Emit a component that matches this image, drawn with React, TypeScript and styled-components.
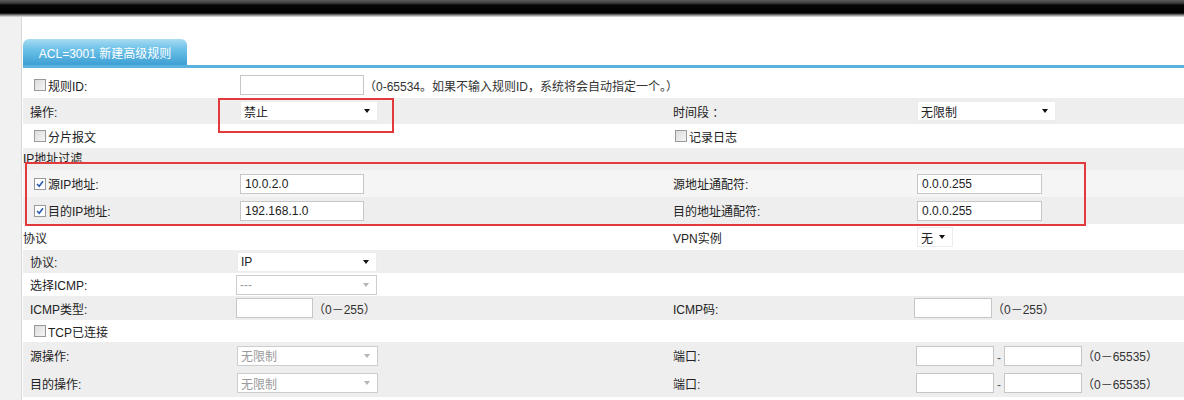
import React from "react";
import styled, { createGlobalStyle } from "styled-components";

const GlobalStyle = createGlobalStyle`
  html, body {
    margin: 0;
    padding: 0;
    background: #fff;
  }
  body {
    font-family: "Liberation Sans", "Noto Sans CJK SC", sans-serif;
    font-size: 12px;
    color: #222;
  }
`;

const Page = styled.div`
  position: relative;
  width: 1184px;
  height: 400px;
  overflow: hidden;
`;

const TopBar = styled.div`
  height: 17px;
  background: linear-gradient(
    to bottom,
    #5c5c5c 0px,
    #3c3c3c 3px,
    #060606 5px,
    #000 13px,
    #808080 15px,
    #e6e6e6 17px
  );
`;

const Shell = styled.div`
  display: flex;
  height: 383px;
`;

const SideStrip = styled.div`
  width: 21px;
  flex: none;
  background: #f1f1f1;
  border-right: 1px solid #d9d9d9;
`;

const Main = styled.div`
  flex: 1;
  padding: 22px 0 0 1px;
`;

const TabBar = styled.div`
  display: flex;
  border-bottom: 3px solid #5cb2de;
`;

const Tab = styled.div`
  width: 164px;
  height: 26px;
  border-radius: 6px 6px 0 0;
  background: linear-gradient(to bottom, #a8dcf3 0%, #6cc1e8 40%, #3d9fd3 100%);
  color: #fff;
  display: flex;
  align-items: center;
  justify-content: center;
  font-size: 12px;
`;

const Form = styled.div`
  margin-top: 4px;
`;

const Row = styled.div<{ $h: number; $bg?: string }>`
  display: grid;
  grid-template-columns: 213px 434px 244px 1fr;
  align-items: center;
  height: ${(p) => p.$h}px;
  background: ${(p) => p.$bg || "#fff"};
`;

const SectionRow = styled.div<{ $h: number; $bg?: string }>`
  height: ${(p) => p.$h}px;
  background: ${(p) => p.$bg || "#fff"};
  padding-top: 3px;
  box-sizing: border-box;
  line-height: 16px;
`;

const Cell = styled.div<{ $pad?: number }>`
  display: flex;
  align-items: center;
  padding-left: ${(p) => p.$pad ?? 0}px;
  white-space: nowrap;
`;

const TextInput = styled.input<{ $w: number }>`
  width: ${(p) => p.$w}px;
  height: 20px;
  box-sizing: border-box;
  border: 1px solid #c6c6c6;
  background: #fff;
  padding: 0 4px;
  font-family: "Liberation Sans", "Noto Sans CJK SC", sans-serif;
  font-size: 12px;
  color: #222;
  outline: none;
`;

const SelectBox = styled.div<{ $w: number; $off?: boolean }>`
  width: ${(p) => p.$w}px;
  height: 20px;
  box-sizing: border-box;
  border: 1px solid ${(p) => (p.$off ? "#cdcdcd" : "#ececec")};
  background: #fff;
  display: flex;
  align-items: center;
  justify-content: space-between;
  padding: 0 7px 0 3px;
  color: ${(p) => (p.$off ? "#9a9a9a" : "#222")};
`;

const Arrow = styled.span<{ $off?: boolean }>`
  width: 0;
  height: 0;
  border-left: 3.5px solid transparent;
  border-right: 3.5px solid transparent;
  border-top: 4px solid ${(p) => (p.$off ? "#b5b5b5" : "#111")};
`;

const Hint = styled.span<{ $gap?: number }>`
  margin-left: ${(p) => p.$gap ?? 0}px;
  color: #333;
`;

const Dash = styled.span`
  margin: 4px 3px 0;
  color: #555;
`;

const Box = styled.span<{ $on?: boolean }>`
  width: 12px;
  height: 12px;
  box-sizing: border-box;
  border: 1px solid #999;
  background: ${(p) =>
    p.$on ? "#fff" : "linear-gradient(135deg, #dcdcdc 0%, #f6f6f6 100%)"};
  display: inline-flex;
  align-items: center;
  justify-content: center;
  margin-right: 2px;
`;

const Highlight = styled.div<{ $x: number; $y: number; $w: number; $h: number }>`
  position: absolute;
  left: ${(p) => p.$x}px;
  top: ${(p) => p.$y}px;
  width: ${(p) => p.$w}px;
  height: ${(p) => p.$h}px;
  box-sizing: border-box;
  border: 2px solid #e23a3c;
  pointer-events: none;
`;

const GRAY = "#eeeeee";

const Check = ({ on, label }: { on?: boolean; label: string }) => (
  <>
    <Box $on={on}>
      {on && (
        <svg width="8" height="8" viewBox="0 0 8 8">
          <path d="M1 4 L3.2 6.3 L7 1.2" fill="none" stroke="#2a5db0" strokeWidth="1.6" />
        </svg>
      )}
    </Box>
    {label}
  </>
);

const Select = ({ w, value, off }: { w: number; value: string; off?: boolean }) => (
  <SelectBox $w={w} $off={off}>
    <span>{value}</span>
    <Arrow $off={off} />
  </SelectBox>
);

const PortCell = () => (
  <Cell $pad={2}>
    <TextInput $w={78} readOnly />
    <Dash>-</Dash>
    <TextInput $w={78} readOnly />
    <Hint>（0－65535）</Hint>
  </Cell>
);

export default function App() {
  return (
    <Page>
      <GlobalStyle />
      <TopBar />
      <Shell>
        <SideStrip />
        <Main>
          <TabBar>
            <Tab>ACL=3001 新建高级规则</Tab>
          </TabBar>
          <Form>
            <Row $h={26}>
              <Cell $pad={11}>
                <Check label="规则ID:" />
              </Cell>
              <Cell $pad={4}>
                <TextInput $w={124} readOnly />
                <Hint>（0-65534。如果不输入规则ID，系统将会自动指定一个。）</Hint>
              </Cell>
              <Cell />
              <Cell />
            </Row>
            <Row $h={26} $bg={GRAY}>
              <Cell $pad={7}>操作:</Cell>
              <Cell $pad={4}>
                <Select w={138} value="禁止" />
              </Cell>
              <Cell $pad={3}>时间段 ：</Cell>
              <Cell $pad={3}>
                <Select w={139} value="无限制" />
              </Cell>
            </Row>
            <Row $h={24}>
              <Cell $pad={11}>
                <Check label="分片报文" />
              </Cell>
              <Cell />
              <Cell $pad={5}>
                <Check label="记录日志" />
              </Cell>
              <Cell />
            </Row>
            <SectionRow $h={22} $bg={GRAY}>
              IP地址过滤
            </SectionRow>
            <Row $h={27} $bg="#f5f5f5">
              <Cell $pad={11}>
                <Check on label="源IP地址:" />
              </Cell>
              <Cell $pad={4}>
                <TextInput $w={124} defaultValue="10.0.2.0" readOnly />
              </Cell>
              <Cell $pad={3}>源地址通配符:</Cell>
              <Cell $pad={3}>
                <TextInput $w={125} defaultValue="0.0.0.255" readOnly />
              </Cell>
            </Row>
            <Row $h={27} $bg={GRAY}>
              <Cell $pad={11}>
                <Check on label="目的IP地址:" />
              </Cell>
              <Cell $pad={4}>
                <TextInput $w={124} defaultValue="192.168.1.0" readOnly />
              </Cell>
              <Cell $pad={3}>目的地址通配符:</Cell>
              <Cell $pad={3}>
                <TextInput $w={125} defaultValue="0.0.0.255" readOnly />
              </Cell>
            </Row>
            <Row $h={26}>
              <Cell>协议</Cell>
              <Cell />
              <Cell $pad={3}>VPN实例</Cell>
              <Cell $pad={3}>
                <Select w={36} value="无" />
              </Cell>
            </Row>
            <Row $h={23} $bg={GRAY}>
              <Cell $pad={7}>协议:</Cell>
              <Cell $pad={1}>
                <Select w={140} value="IP" />
              </Cell>
              <Cell />
              <Cell />
            </Row>
            <Row $h={23}>
              <Cell $pad={7}>选择ICMP:</Cell>
              <Cell>
                <Select w={141} value="---" off />
              </Cell>
              <Cell />
              <Cell />
            </Row>
            <Row $h={24} $bg={GRAY}>
              <Cell $pad={7}>ICMP类型:</Cell>
              <Cell>
                <TextInput $w={77} readOnly />
                <Hint>（0－255）</Hint>
              </Cell>
              <Cell $pad={3}>ICMP码:</Cell>
              <Cell>
                <TextInput $w={78} readOnly />
                <Hint>（0－255）</Hint>
              </Cell>
            </Row>
            <Row $h={22}>
              <Cell $pad={11}>
                <Check label="TCP已连接" />
              </Cell>
              <Cell />
              <Cell />
              <Cell />
            </Row>
            <Row $h={27} $bg={GRAY}>
              <Cell $pad={7}>源操作:</Cell>
              <Cell $pad={1}>
                <Select w={141} value="无限制" off />
              </Cell>
              <Cell $pad={3}>端口:</Cell>
              <PortCell />
            </Row>
            <Row $h={28} $bg={GRAY}>
              <Cell $pad={7}>目的操作:</Cell>
              <Cell $pad={1}>
                <Select w={141} value="无限制" off />
              </Cell>
              <Cell $pad={3}>端口:</Cell>
              <PortCell />
            </Row>
          </Form>
        </Main>
      </Shell>
      <Highlight $x={218} $y={98} $w={176} $h={35} />
      <Highlight $x={25} $y={162} $w={1061} $h={64} />
    </Page>
  );
}
